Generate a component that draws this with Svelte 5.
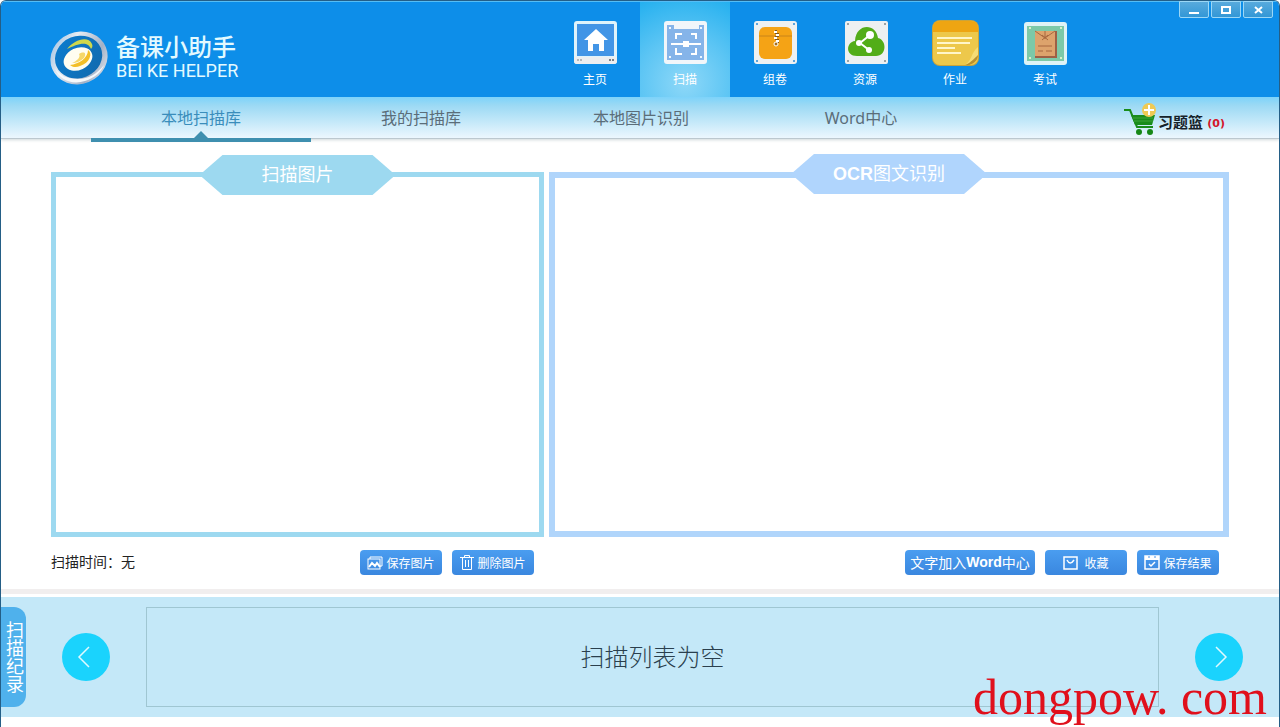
<script lang="ts">
    interface NavItem {
        id: string;
        label: string;
    }

    const navItems: NavItem[] = [
        { id: "home", label: "主页" },
        { id: "scan", label: "扫描" },
        { id: "paper", label: "组卷" },
        { id: "resource", label: "资源" },
        { id: "homework", label: "作业" },
        { id: "exam", label: "考试" },
    ];

    const tabs = ["本地扫描库", "我的扫描库", "本地图片识别", "Word中心"];

    let activeNav: string = $state("scan");
    let activeTab: number = $state(0);
    let basketCount: number = $state(0);
    let scanTime: string = $state("无");
</script>

<div class="window">
    <header>
        <div class="brand">
            <svg width="60" height="56" viewBox="0 0 60 56" aria-hidden="true">
                <defs>
                    <linearGradient id="ring" x1="0" y1="0" x2="1" y2="1">
                        <stop offset="0" stop-color="#8fb6dc" />
                        <stop offset=".35" stop-color="#e6ecf3" />
                        <stop offset=".7" stop-color="#a3b1c6" />
                        <stop offset="1" stop-color="#f4f6f8" />
                    </linearGradient>
                    <linearGradient id="disc" x1="0" y1="0" x2="1" y2="1">
                        <stop offset="0" stop-color="#0b7dd0" />
                        <stop offset="1" stop-color="#1269ac" />
                    </linearGradient>
                </defs>
                <g transform="rotate(-22 29 28)">
                    <ellipse cx="29" cy="28" rx="29" ry="26" fill="url(#ring)" />
                    <ellipse cx="29" cy="27" rx="24" ry="21" fill="url(#disc)" />
                </g>
                <path d="M5 38C10 51 23 55 35 51C45 48 52 41 54 35C47 44 38 49 28 49C17 49 9 45 5 38Z" fill="#f5f8fb" />
                <path d="M17 19C24 10 38 5 42 14C43 16 42 18 41 19C38 10 27 14 17 19Z" fill="#cfd84b" />
                <ellipse cx="28" cy="29" rx="15" ry="11" fill="#fffdf0" transform="rotate(-25 28 29)" />
                <path d="M38 20C43 23 40 33 30 36C26 38 22 37 20 35C29 34 38 28 38 20Z" fill="#f3bf28" />
                <path d="M29 24C34 21 37 23 34 28C31 31 26 33 22 33C27 31 31 27 29 24Z" fill="#f6d768" />
            </svg>
            <div class="brand-text">
                <strong>备课小助手</strong>
                <span>BEI KE HELPER</span>
            </div>
        </div>

        <nav>
            {#each navItems as item}
                <button class="nav-item" class:active={activeNav === item.id} onclick={() => (activeNav = item.id)}>
                    <svg width="48" height="48" viewBox="0 0 48 48" aria-hidden="true">
                        {#if item.id === "home"}
                            <rect x="3" y="3" width="43" height="43" rx="3" fill="#dff3fb" />
                            <path d="M3 39H46V43Q46 46 43 46H6Q3 46 3 43Z" fill="#eceef0" />
                            <rect x="6" y="6" width="37" height="32" fill="#4295e6" />
                            <path d="M25 11L37 22H33V33H28V26H22V33H17V22H13Z" fill="#fff" />
                            <path d="M6 42H8M9 42H11" stroke="#b4b8bc" stroke-width="2" />
                            <path d="M38 42H40M41 42H43" stroke="#7b8085" stroke-width="2" />
                        {:else if item.id === "scan"}
                            <rect x="3" y="3" width="43" height="43" rx="3" fill="#f1f6fa" />
                            <path d="M6 7H13V11H38V7H43V42H6Z" fill="#85b4e9" />
                            <path d="M15 21V16H21M30 16H35V21M35 30V36H30M21 36H15V30M10 26H40" fill="none" stroke="#fff" stroke-width="2" />
                            <rect x="22" y="23" width="6" height="6" fill="#fff" />
                            <path d="M8 10H10M39 10H41M8 39H10M39 39H41" stroke="#eef8ff" stroke-width="2" />
                        {:else if item.id === "paper"}
                            <rect x="3" y="3" width="43" height="43" rx="3" fill="#eef1f2" />
                            <rect x="8" y="9" width="33" height="32" rx="6" fill="#f5a315" />
                            <path d="M8 18H41" stroke="#c9841b" />
                            <path d="M24 14H26M26 17H28M24 20H26M26 23H28" stroke="#7a5420" stroke-width="4" />
                            <path d="M23 14H26M25 17H28M23 20H26M25 23H28" stroke="#fff" stroke-width="2" />
                            <circle cx="25" cy="26" r="2" fill="#a66f1c" stroke="#fff" />
                            <path d="M5 6H7M42 6H44M5 43H7M42 43H44" stroke="#5da4dc" stroke-width="2" />
                        {:else if item.id === "resource"}
                            <rect x="4" y="3" width="43" height="43" rx="2" fill="#edf0f1" />
                            <path d="M16 38C4 38 5 24 14 23C15 5 35 5 37 20C46 22 46 38 35 38Z" fill="#52ad18" />
                            <path d="M29 17L19 25L28 32" fill="none" stroke="#fff" stroke-width="2" />
                            <circle cx="29" cy="17" r="4" fill="#fff" />
                            <circle cx="18" cy="25" r="3" fill="#fff" />
                            <circle cx="28" cy="32" r="3" fill="#fff" />
                            <path d="M6 6H8M43 6H45M6 43H8M43 43H45" stroke="#9aa2a5" stroke-width="2" />
                        {:else if item.id === "homework"}
                            <rect x="1" y="2" width="47" height="46" rx="8" fill="#c9a43c" />
                            <rect x="2" y="3" width="45" height="44" rx="7" fill="#edc84b" />
                            <path d="M2 14V10Q2 3 9 3H40Q47 3 47 10V14Z" fill="#eea512" />
                            <path d="M6 20H41M6 25H39M6 30H24M6 35H30" stroke="#fff6ca" stroke-width="2" />
                            <path d="M47 37C42 37 43 44 34 47C41 48 47 43 47 37Z" fill="#b89031" />
                            <path d="M47 29C39 36 42 41 34 47C40 44 43 41 47 37Z" fill="#f5dc75" />
                        {:else}
                            <rect x="3" y="4" width="43" height="43" rx="3" fill="#def3f6" />
                            <rect x="6" y="8" width="37" height="35" fill="#7cc9a8" />
                            <rect x="14" y="13" width="22" height="27" fill="#9e6045" />
                            <rect x="14" y="13" width="20" height="25" fill="#dda36c" />
                            <path d="M14 13L24 20L34 13M24 13V21M21 17L27 22M27 17L21 22M17 28H31M17 33H22M25 33H31" fill="none" stroke="#a7673f" />
                            <path d="M8 10H10M39 10H41M8 40H10M39 40H41" stroke="#d9f2c7" stroke-width="2" />
                        {/if}
                    </svg>
                    <span>{item.label}</span>
                </button>
            {/each}
        </nav>

        <div class="window-controls">
            <button aria-label="最小化">
                <svg width="14" height="10" viewBox="0 0 14 10"><path d="M2 8H12" stroke="#fff" stroke-width="2" /></svg>
            </button>
            <button aria-label="最大化">
                <svg width="14" height="10" viewBox="0 0 14 10"><rect x="3" y="2" width="8" height="6" fill="none" stroke="#fff" stroke-width="2" /></svg>
            </button>
            <button aria-label="关闭">
                <svg width="14" height="10" viewBox="0 0 14 10"><path d="M4 2L11 8M11 2L4 8" stroke="#fff" stroke-width="2" /></svg>
            </button>
        </div>
    </header>

    <div class="tab-bar">
        {#each tabs as tab, i}
            <button class="tab" class:active={activeTab === i} onclick={() => (activeTab = i)}>{tab}</button>
        {/each}
        <a class="basket" href="#basket">
            <svg width="34" height="34" viewBox="0 0 34 34" aria-hidden="true">
                <path d="M0 7H6L13 24H29" fill="none" stroke="#198c1b" stroke-width="2" />
                <path d="M7 12H31L28 22H11Z" fill="#198c1b" />
                <path d="M9 15H29M10 18H29" stroke="#3fa43a" />
                <circle cx="15" cy="29" r="3" fill="#168817" />
                <circle cx="26" cy="29" r="3" fill="#168817" />
                <circle cx="25" cy="7" r="7" fill="#efca55" />
                <path d="M25 2V12M20 7H30" stroke="#fff" stroke-width="2" />
            </svg>
            <span class="basket-text">习题篮 <span class="count">({basketCount})</span></span>
        </a>
    </div>

    <main>
        <section class="column">
            <div class="panel scan-panel">
                <h2>扫描图片</h2>
            </div>
            <div class="actions">
                <span class="scan-time">扫描时间：{scanTime}</span>
                <button class="action">
                    <svg width="16" height="14" viewBox="0 0 16 14" fill="none" stroke="#fff" aria-hidden="true">
                        <path d="M3 3V1H15V10H13" />
                        <rect x="1" y="3" width="12" height="10" />
                        <path d="M2 11L5 7L8 10L10 7L13 11" stroke-width="2" />
                    </svg>
                    保存图片
                </button>
                <button class="action">
                    <svg width="14" height="15" viewBox="0 0 14 15" fill="none" stroke="#fff" aria-hidden="true">
                        <path d="M0 2.5H14M4.5 2.5V.5H9.5V2.5M2.5 2.5V14.5H11.5V2.5M5.5 5V12M8.5 5V12" />
                    </svg>
                    删除图片
                </button>
            </div>
        </section>

        <section class="column">
            <div class="panel ocr-panel">
                <h2><b>OCR</b>图文识别</h2>
            </div>
            <div class="actions">
                <button class="action wide">文字加入<b>Word</b>中心</button>
                <button class="action favorite">
                    <svg width="15" height="14" viewBox="0 0 15 14" fill="none" stroke="#fff" aria-hidden="true">
                        <rect x="1" y="1" width="13" height="12" stroke-width="1.5" />
                        <path d="M4 4Q7 10 11 4" stroke-width="1.5" />
                    </svg>
                    收藏
                </button>
                <button class="action">
                    <svg width="16" height="15" viewBox="0 0 16 15" fill="none" stroke="#fff" aria-hidden="true">
                        <rect x="1" y="1" width="14" height="13" stroke-width="1.5" />
                        <path d="M1 3H15" stroke-width="4" />
                        <path d="M4 2H6M10 2H12" stroke="#4491e8" />
                        <path d="M5 9L7 11L11 7" stroke-width="1.5" />
                    </svg>
                    保存结果
                </button>
            </div>
        </section>
    </main>

    <section class="tray">
        <button class="record-tab">扫描纪录</button>
        <button class="arrow" aria-label="上一页">
            <svg width="48" height="48" viewBox="0 0 48 48"><path d="M27 14L17 24L27 34" fill="none" stroke="#dffaff" stroke-width="1.5" /></svg>
        </button>
        <div class="scan-list">扫描列表为空</div>
        <button class="arrow" aria-label="下一页">
            <svg width="48" height="48" viewBox="0 0 48 48"><path d="M21 14L31 24L21 34" fill="none" stroke="#dffaff" stroke-width="1.5" /></svg>
        </button>
    </section>

    <div class="watermark">dongpow. com</div>
</div>

<style>
    :global(body) {
        background: #fff;
    }

    .window,
    .window * {
        box-sizing: border-box;
    }

    .window {
        position: relative;
        display: flex;
        flex-direction: column;
        min-height: 100vh;
        padding-bottom: 10px;
        border: solid #245e86;
        border-width: 1px 1px 0;
        border-radius: 6px 6px 0 0;
        overflow: hidden;
        background: #fff;
        font-family: "Liberation Sans", "Noto Sans CJK SC", sans-serif;
    }

    button {
        padding: 0;
        border: 0;
        background: none;
        color: inherit;
        font: inherit;
        cursor: pointer;
    }

    svg {
        display: block;
        flex: none;
    }

    header {
        position: relative;
        display: flex;
        justify-content: space-between;
        height: 96px;
        padding: 0 189px 0 49px;
        border-top: 1px solid #55bdf5;
        background: #0d8ee9;
        color: #fff;
    }

    .brand {
        display: flex;
        align-items: center;
        gap: 6px;
        padding-top: 16px;
    }

    .brand-text {
        display: flex;
        flex-direction: column;
        color: #e3faff;
        white-space: nowrap;
    }

    .brand-text strong {
        font-size: 24px;
        font-weight: 500;
        line-height: 26px;
    }

    .brand-text span {
        font-family: Roboto, sans-serif;
        font-size: 18px;
        line-height: 20px;
    }

    nav {
        display: flex;
    }

    .nav-item {
        display: flex;
        flex-direction: column;
        align-items: center;
        gap: 5px;
        width: 90px;
        padding-top: 16px;
        font-size: 12px;
        line-height: 18px;
    }

    .nav-item.active {
        background: radial-gradient(circle at 50% 85%, #8ed8f8 0%, #5cc5f4 50%, #24b0ef 100%);
    }

    .window-controls {
        position: absolute;
        top: -1px;
        right: 6px;
        display: flex;
        gap: 2px;
    }

    .window-controls button {
        display: flex;
        align-items: center;
        justify-content: center;
        width: 30px;
        height: 17px;
        border: 1px solid #9bd7f6;
        border-radius: 0 0 2px 2px;
        background: linear-gradient(#58aadd, #3297d6);
    }

    .tab-bar {
        display: flex;
        height: 42px;
        padding: 0 54px 0 90px;
        border-bottom: 1px solid #bcc8cf;
        background: linear-gradient(#7dd3fa, #9bd9f4 20%, #ecf7fe);
        box-shadow: 0 1px 3px #cfd8da;
    }

    .tab {
        position: relative;
        width: 220px;
        color: #5b6d79;
        font-family: "Noto Sans", "Noto Sans CJK SC", sans-serif;
        font-size: 16px;
        line-height: 42px;
    }

    .tab.active {
        color: #3a8dbb;
    }

    .tab.active::before {
        content: "";
        position: absolute;
        right: 0;
        bottom: -4px;
        left: 0;
        height: 4px;
        background: #3f8faf;
    }

    .tab.active::after {
        content: "";
        position: absolute;
        bottom: 0;
        left: 50%;
        border: solid transparent;
        border-width: 0 7px 7px;
        border-bottom-color: #3f8faf;
        transform: translateX(-50%);
    }

    .basket {
        display: flex;
        align-items: center;
        margin-left: auto;
        padding-top: 4px;
        color: #16222a;
        font-size: 15px;
        font-weight: bold;
        text-decoration: none;
        white-space: nowrap;
    }

    .basket-text {
        padding-top: 4px;
    }

    .basket .count {
        color: #d4142a;
        font-family: "DejaVu Sans", sans-serif;
        font-size: 11px;
        vertical-align: 1px;
    }

    main {
        flex: 1;
        display: grid;
        grid-template-columns: 493fr 680fr;
        gap: 5px;
        padding: 33px 50px 14px;
    }

    .column {
        display: flex;
        flex-direction: column;
        gap: 13px;
    }

    .panel {
        flex: 1;
        display: flex;
        justify-content: center;
        align-items: flex-start;
        border: 5px solid #9dd9f0;
    }

    .panel h2 {
        width: 196px;
        height: 40px;
        margin: -22px 0 0;
        background: #9dd9f0;
        clip-path: polygon(0 50%, 23px 0, 173px 0, 100% 50%, 173px 100%, 23px 100%);
        color: #fff;
        font-size: 18px;
        font-weight: 400;
        line-height: 40px;
        text-align: center;
    }

    .ocr-panel {
        border-width: 6px;
        border-color: #b0d5fb;
    }

    .ocr-panel h2 {
        margin-top: -24px;
        background: #b0d5fd;
    }

    .actions {
        display: flex;
        justify-content: flex-end;
        gap: 10px;
        padding-right: 10px;
    }

    .scan-time {
        margin-right: auto;
        color: #222;
        font-size: 14px;
        line-height: 25px;
    }

    .action {
        display: flex;
        align-items: center;
        justify-content: center;
        gap: 3px;
        width: 82px;
        height: 25px;
        border-radius: 4px;
        background: linear-gradient(#4a9df0, #3a87df);
        color: #fff;
        font-size: 12px;
        white-space: nowrap;
    }

    .action.wide {
        gap: 0;
        width: 130px;
        padding-bottom: 2px;
        font-size: 14px;
    }

    .action.favorite {
        gap: 6px;
    }

    .tray {
        position: relative;
        display: flex;
        align-items: center;
        justify-content: space-between;
        min-height: 120px;
        margin-top: 8px;
        padding: 0 36px 0 0;
        background: #c4e8f8;
    }

    .tray::before {
        content: "";
        position: absolute;
        top: -8px;
        right: 0;
        left: 0;
        height: 5px;
        background: #f1eeee;
    }

    .record-tab {
        width: 25px;
        height: 100px;
        padding-right: 2px;
        border-radius: 0 12px 12px 0;
        background: #4fb1ec;
        color: #fff;
        font-size: 18px;
        line-height: 23px;
        writing-mode: vertical-rl;
    }

    .arrow {
        border-radius: 50%;
        background: #1ad3fd;
    }

    .scan-list {
        display: flex;
        flex: 1;
        align-items: center;
        justify-content: center;
        height: 100px;
        margin: 0 36px;
        padding-bottom: 4px;
        border: 1px solid #9fc6d2;
        color: #2a3f4d;
        font-size: 24px;
        font-weight: 300;
    }

    .record-tab + .arrow {
        margin-left: 36px;
    }

    .watermark {
        position: absolute;
        right: 12px;
        bottom: 2px;
        color: #e0101c;
        font-family: "Liberation Serif", serif;
        font-size: 50px;
        line-height: 56px;
        pointer-events: none;
    }
</style>
